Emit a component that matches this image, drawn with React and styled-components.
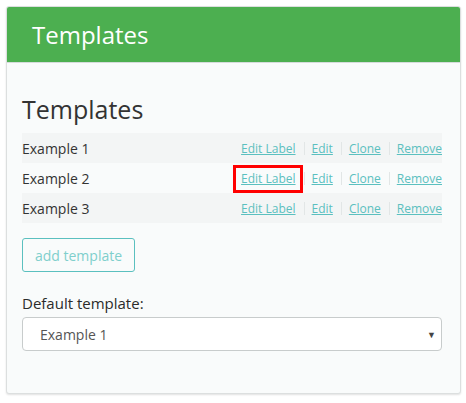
import React from "react";
import styled, { createGlobalStyle } from "styled-components";

const Global = createGlobalStyle`
  html, body { margin: 0; padding: 0; background: #ffffff; }
  body { font-family: "Open Sans", "Liberation Sans", sans-serif; color: #333; }
  * { box-sizing: border-box; }
`;

const Card = styled.div`
  margin: 6px;
  width: 455px;
  height: 388px;
  border: 1px solid #dcdfdf;
  border-radius: 3px;
  background: #f9fbfb;
  box-shadow: 0 1px 2px rgba(0,0,0,0.12);
  overflow: hidden;
`;

const Header = styled.div`
  height: 56px;
  background: #4caf50;
  color: #fff;
  font-size: 24px;
  display: flex;
  align-items: center;
  padding-left: 25px;
  border-bottom: 1px solid #d6dbdb;
`;

const Body = styled.div`
  padding: 30px 18px 0 15px;
`;

const Title = styled.h2`
  margin: 0 0 7px 0;
  font-size: 25px;
  font-weight: 400;
  line-height: 33px;
  color: #333;
`;

const List = styled.div`
  display: flex;
  flex-direction: column;
`;

const Row = styled.div`
  height: 30px;
  display: flex;
  align-items: center;
  justify-content: space-between;
  background: ${(p) => (p.$striped ? "#f3f5f5" : "transparent")};
  font-size: 14px;
  color: #333;
`;

const Actions = styled.div`
  display: flex;
  align-items: center;
  font-size: 12px;
`;

const Link = styled.a`
  color: #5bc0bf;
  text-decoration: underline;
  cursor: pointer;
  position: relative;
  &::after {
    content: "";
    display: ${(p) => (p.$highlight ? "block" : "none")};
    position: absolute;
    top: -5px;
    bottom: -6px;
    left: -8px;
    right: -7px;
    border: 3px solid #f00;
  }
`;

const Sep = styled.span`
  display: inline-block;
  width: 1px;
  height: 13px;
  background: #e2e6e6;
  margin: 0 7px 0 8px;
`;

const AddButton = styled.button`
  margin-top: 15px;
  height: 34px;
  width: 113px;
  border: 1px solid #5bc0bf;
  border-radius: 3px;
  background: transparent;
  color: #7fcfcc;
  font-family: "Open Sans", "Liberation Sans", sans-serif;
  font-size: 14px;
  padding: 0;
`;

const Label = styled.div`
  margin-top: 21px;
  font-size: 15px;
  font-weight: 400;
  color: #2b2b2b;
  line-height: 20px;
`;

const Select = styled.div`
  margin-top: 4px;
  height: 34px;
  border: 1px solid #c8cccc;
  border-radius: 4px;
  background: #fff;
  display: flex;
  align-items: center;
  justify-content: space-between;
  padding: 0 5px 0 17px;
  font-size: 14px;
  color: #555;
`;

const Arrow = styled.span`
  font-size: 9px;
  color: #444;
`;

const rows = ["Example 1", "Example 2", "Example 3"];

export default function App() {
  return (
    <>
      <Global />
      <Card>
        <Header>Templates</Header>
        <Body>
          <Title>Templates</Title>
          <List>
            {rows.map((r, i) => (
              <Row key={r} $striped={i % 2 === 0}>
                <span>{r}</span>
                <Actions>
                  <Link $highlight={i === 1}>Edit Label</Link>
                  <Sep />
                  <Link>Edit</Link>
                  <Sep />
                  <Link>Clone</Link>
                  <Sep />
                  <Link>Remove</Link>
                </Actions>
              </Row>
            ))}
          </List>
          <AddButton>add template</AddButton>
          <Label>Default template:</Label>
          <Select>
            <span>Example 1</span>
            <Arrow>▼</Arrow>
          </Select>
        </Body>
      </Card>
    </>
  );
}
